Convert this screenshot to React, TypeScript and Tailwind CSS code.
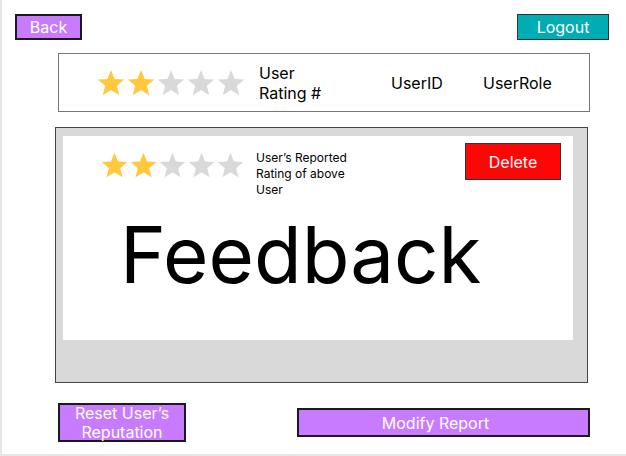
import React from "react"

const font = { fontFamily: "Inter, 'Noto Sans', sans-serif" }

function Star({ on, size }: { on: boolean; size: number }) {
  return (
    <svg width={size} height={size} viewBox="0 0 24 24">
      <polygon
        points="12,1.5 14.9,8.7 22.6,9.2 16.7,14.2 18.6,21.8 12,17.6 5.4,21.8 7.3,14.2 1.4,9.2 9.1,8.7"
        fill={on ? "#ffc83d" : "#d9d9d9"}
      />
    </svg>
  )
}

function Stars({ size }: { size: number }) {
  return (
    <div className="flex">
      {[0, 1, 2, 3, 4].map((i) => (
        <Star key={i} on={i < 2} size={size} />
      ))}
    </div>
  )
}

export default function App() {
  return (
    <div
      className="flex h-[456px] w-[626px] flex-col border-b-2 border-l-2 border-[#e6e6e6] bg-white text-black"
      style={font}
    >
      {/* top bar */}
      <div className="mt-[14px] flex items-center justify-between pl-[13px] pr-[17px]">
        <button className="flex h-[26px] w-[67px] items-center justify-center border-2 border-[#1a1a1a] bg-[#c97bff] text-[16px] text-white">
          Back
        </button>
        <button className="flex h-[26px] w-[92px] items-center justify-center border border-[#333] bg-[#00adb5] text-[16px] text-white">
          Logout
        </button>
      </div>

      {/* user summary */}
      <div className="ml-[56px] mt-[13px] flex h-[59px] w-[532px] items-center border border-[#777] pl-[37px]">
        <Stars size={30} />
        <div className="ml-[13px] w-[132px] text-[16px] leading-[20px]">
          User
          <br />
          Rating #
        </div>
        <div className="w-[92px] text-[16px]">UserID</div>
        <div className="text-[16px]">UserRole</div>
      </div>

      {/* report panel */}
      <div className="ml-[53px] mt-[15px] h-[256px] w-[533px] border border-[#444] bg-[#d9d9d9] pl-[7px] pr-[14px] pt-[8px]">
        <div className="h-[204px] bg-white">
          <div className="flex h-[60px] items-start pl-[37px]">
            <div className="mt-[15px]">
              <Stars size={29} />
            </div>
            <div className="ml-[11px] mt-[14px] w-[110px] text-[12px] leading-[16px]">
              User’s Reported Rating of above User
            </div>
            <button className="ml-auto mr-[12px] mt-[7px] flex h-[37px] w-[96px] items-center justify-center border border-[#333] bg-[#fe0606] text-[16px] text-white">
              Delete
            </button>
          </div>
          <div className="mt-[20px] pl-[57px] text-[78px] leading-none">Feedback</div>
        </div>
      </div>

      {/* actions */}
      <div className="ml-[56px] mt-[20px] flex items-start">
        <button className="flex h-[39px] w-[128px] flex-col items-center justify-center border-2 border-[#1a1a1a] bg-[#c97bff] text-[16px] leading-[19px] text-white">
          <span>Reset User’s</span>
          <span>Reputation</span>
        </button>
        <button className="ml-[111px] mt-[5px] flex h-[29px] w-[293px] items-center justify-center border-2 border-[#1a1a1a] bg-[#c97bff] pr-[16px] text-[16px] text-white">
          Modify Report
        </button>
      </div>
    </div>
  )
}
